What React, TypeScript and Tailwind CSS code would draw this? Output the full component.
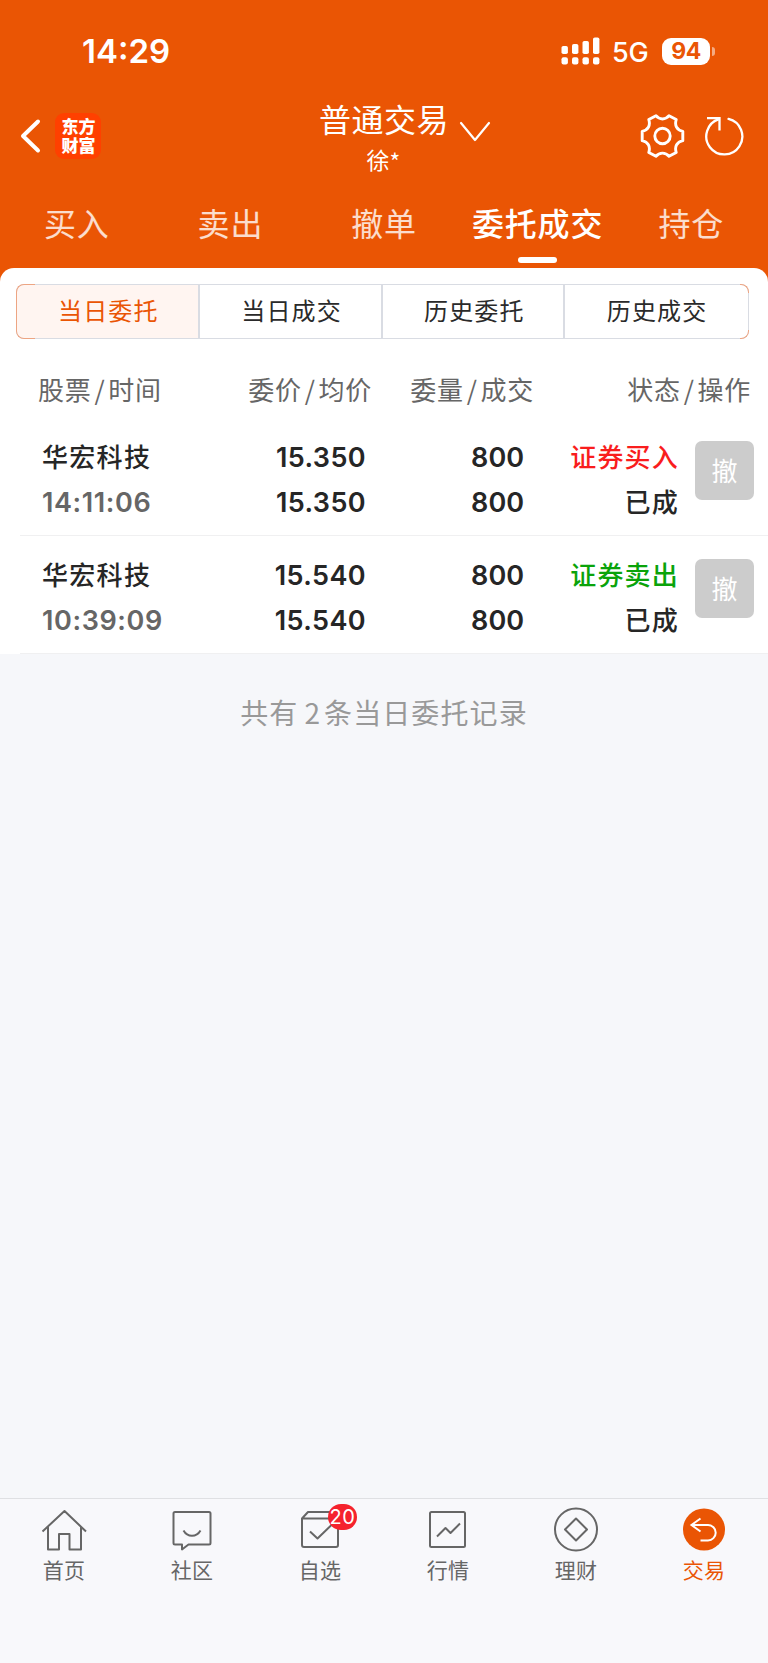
import type { ReactNode } from "react";

const cjk = "font-['Noto_Sans_CJK_SC',sans-serif]";
const latin = "font-['Inter','Noto_Sans_CJK_SC',sans-serif]";

const tabs = ["买入", "卖出", "撤单", "委托成交", "持仓"];
const segments = ["当日委托", "当日成交", "历史委托", "历史成交"];
const columns = [
  ["股票", "时间"],
  ["委价", "均价"],
  ["委量", "成交"],
  ["状态", "操作"],
];

type Order = { name: string; time: string; price: string; avg: string; qty: string; done: string; side: string; buy: boolean };

const orders: Order[] = [
  { name: "华宏科技", time: "14:11:06", price: "15.350", avg: "15.350", qty: "800", done: "800", side: "证券买入", buy: true },
  { name: "华宏科技", time: "10:39:09", price: "15.540", avg: "15.540", qty: "800", done: "800", side: "证券卖出", buy: false },
];

function StatusBar() {
  return (
    <div className={`flex h-[103px] items-center text-white ${latin}`}>
      <span className="mb-[2px] ml-[82px] w-[478px] text-[33px] font-semibold leading-[40px]">14:29</span>
      <svg className="mb-[1px] h-[28px] w-[40px]" viewBox="0 0 40 28" fill="#fff">
        <rect x="1.500" y="9" width="6.400" height="8" rx="1.800" />
        <rect x="12" y="7" width="6.400" height="10" rx="1.800" />
        <rect x="22.500" y="4" width="6.400" height="13" rx="1.800" />
        <rect x="33" y="0.500" width="6.400" height="16.500" rx="1.800" />
        <rect x="1.500" y="20.300" width="6.400" height="7.200" rx="2" />
        <rect x="12" y="20.300" width="6.400" height="7.200" rx="2" />
        <rect x="22.500" y="20.300" width="6.400" height="7.200" rx="2" />
        <rect x="33" y="20.300" width="6.400" height="7.200" rx="2" />
      </svg>
      <span className="ml-[12px] mt-[2px] w-[50px] text-[27px] font-medium leading-[40px] tracking-[-0.200px]">5G</span>
      <span className="mb-[1px] flex h-[27px] w-[48px] items-center justify-center rounded-[9px] bg-white text-[23px] font-bold leading-none tracking-[-0.5px] text-[#ea5504]">
        94
      </span>
      <span className="ml-[2px] h-[9px] w-[3px] rounded-r-full bg-white/50" />
    </div>
  );
}

function TitleBar() {
  return (
    <div className="flex h-[82px] text-white">
      <svg className="ml-[20px] mt-[15px] h-[36px] w-[22px]" viewBox="0 0 22 36" fill="none" stroke="#fff" strokeWidth="4" strokeLinecap="round" strokeLinejoin="round">
        <path d="M18 3.500 3 18l15 14.500" />
      </svg>
      <div className={`ml-[13px] mt-[10px] h-[46px] w-[46px] rounded-[9px] bg-[#ff4000] pl-px pt-[2.500px] text-center text-[17px] font-black leading-[19px] ${cjk}`}>
        东方
        <br />
        财富
      </div>
      <div className={`ml-[218px] w-[130px] ${cjk}`}>
        <div className="-mt-[3px] whitespace-nowrap text-[32px] leading-[36px] tracking-[0.500px]">普通交易</div>
        <div className="mt-[10px] pl-[47.500px] text-[23px] leading-[26px]">
          徐<span className="inline-block translate-y-[2px]">*</span>
        </div>
      </div>
      <svg className="ml-[10px] mt-[17px] h-[24px] w-[32px]" viewBox="0 0 32 24" fill="none" stroke="#fff" strokeWidth="2.200" strokeLinecap="round" strokeLinejoin="round">
        <path d="M2 3l14 17L30 3" />
      </svg>
      <svg className="ml-[148px] mt-[11px] h-[44px] w-[46px]" viewBox="-0.500 0 46 44" fill="none" stroke="#fff" strokeWidth="2.900" strokeLinejoin="round">
        <path d="M16.500 1.700C20 6 26 6 29.500 1.700L36.700 5.600C34.800 11.500 37.500 16 43.300 17.300V26.700C37.500 28 34.800 32.500 36.700 38.400L29.500 42.300C26 38 20 38 16.500 42.300L9.300 38.400C11.200 32.500 8.500 28 2.700 26.700V17.300C8.500 16 11.200 11.500 9.300 5.600Z" />
        <circle cx="23" cy="22" r="7.700" />
      </svg>
      <svg className="ml-[19px] mt-[13px] h-[40px] w-[42px]" viewBox="0 0.500 42 40" fill="none" stroke="#fff" strokeWidth="2.300">
        <path d="M24.500 3.400A18 18 0 1 1 15 3.700" strokeLinecap="round" />
        <path d="M3 2.600H15.500V15" />
      </svg>
    </div>
  );
}

function Tabs() {
  return (
    <div className={`grid h-[83px] grid-cols-5 text-center text-[32px] leading-[36px] tracking-[0.800px] ${cjk}`}>
      {tabs.map((t) => (
        <div key={t} className="flex flex-col items-center pt-[19px]">
          <span className={t === "委托成交" ? "whitespace-nowrap font-medium text-white" : "text-white/80"}>{t}</span>
          {t === "委托成交" && <span className="mt-[17px] h-[6px] w-[39px] rounded-full bg-white" />}
        </div>
      ))}
    </div>
  );
}

function Segments() {
  return (
    <div className={`relative ml-[16px] mt-[15px] grid h-[55px] w-[733px] grid-cols-4 rounded-[8px] border border-[#d9dce3] text-[24px] tracking-[1.200px] ${cjk}`}>
      {segments.map((s, i) => (
        <div
          key={s}
          className={
            i === 0
              ? "flex items-center justify-center rounded-l-[7px] border-r-2 border-[#d9dce3] bg-[#fff5f1] pb-[3px] pl-[2px] text-[#ea5504]"
              : i === 3
                ? "flex items-center justify-center rounded-r-[7px] bg-white pb-[3px] pl-px text-[#2a2a2a]"
                : "flex items-center justify-center border-r-2 border-[#d9dce3] bg-white pb-[3px] pl-[3px] text-[#2a2a2a]"
          }
        >
          {s}
        </div>
      ))}
      <span className="absolute -inset-y-px -left-px w-[19px] rounded-l-[8px] border-y border-l border-[#eda583]" />
      <span className="absolute -right-px -top-px h-[9px] w-[9px] rounded-tr-[8px] border-r border-t border-[#eda583]" />
      <span className="absolute -bottom-px -right-px h-[9px] w-[9px] rounded-br-[8px] border-b border-r border-[#eda583]" />
    </div>
  );
}

function OrderRow({ o }: { o: Order }) {
  return (
    <div>
      <div className={`grid h-[117px] grid-cols-[203px_163px_158px_155px_75px] pt-[17px] text-[27px] font-semibold leading-[45px] text-[#262626] ${latin}`}>
        <div className="pl-[42px]">
          <div className={`-mt-[2px] mb-[2px] text-[26px] font-medium tracking-[1.300px] ${cjk}`}>{o.name}</div>
          <div className="tracking-[0.600px] text-[#666] [font-kerning:none]">{o.time}</div>
        </div>
        <div className="text-right tracking-[0.400px]">
          <div>{o.price}</div>
          <div>{o.avg}</div>
        </div>
        <div className="text-right">
          <div>{o.qty}</div>
          <div>{o.done}</div>
        </div>
        <div className={`-mt-[2px] text-right text-[26px] font-medium tracking-[1.200px] ${cjk}`}>
          <div className={o.buy ? "text-[#f91d1d]" : "text-[#0aa30a]"}>{o.side}</div>
          <div>已成</div>
        </div>
        <div className={`ml-[16px] mt-[6px] flex h-[59px] w-[59px] items-center justify-center rounded-[7px] bg-[#ccc] pb-[3px] text-[26px] font-normal text-white ${cjk}`}>
          撤
        </div>
      </div>
      <div className="ml-[20px] h-px bg-[#f0f0f1]" />
    </div>
  );
}

function NavItem({ label, active, children }: { label: string; active?: boolean; children: ReactNode }) {
  return (
    <div className={`flex flex-col items-center pt-[8px] ${active ? "text-[#ea5504]" : "text-[#666]"}`}>
      <div className="relative h-[46px] w-[46px]">
        <svg className="h-[46px] w-[46px]" viewBox="0.500 0 46 46" fill="none" stroke="currentColor" strokeWidth="2" strokeLinejoin="round">
          {children}
        </svg>
        {label === "自选" && (
          <span className={`absolute left-[31px] top-[-3px] flex h-[26px] w-[29px] items-center justify-center rounded-full bg-[#f5222d] text-[20px] leading-none tracking-[0.500px] text-white ${latin}`}>20</span>
        )}
      </div>
      <span className={`mt-[3px] text-[21px] leading-[26px] tracking-[0.300px] ${cjk}`}>{label}</span>
    </div>
  );
}

export default function App() {
  return (
    <div className="flex h-[1663px] w-[768px] flex-col overflow-hidden bg-[#f6f7fa]">
      <header className="bg-[#ea5504]">
        <StatusBar />
        <TitleBar />
        <Tabs />
      </header>
      <div className="bg-[#ea5504]">
        <main className="h-[386px] rounded-t-[14px] bg-white pt-px">
          <Segments />
          <div className={`mt-[32px] grid h-[36px] grid-cols-[208px_164px_162px_217px] text-[26px] leading-[36px] tracking-[0.700px] text-[#666] ${cjk}`}>
            {columns.map(([a, b], i) => (
              <div key={a} className={i === 0 ? "pl-[38px]" : "text-right"}>
                {a}
                <span className="mx-[3px]">/</span>
                {b}
              </div>
            ))}
          </div>
          <div className="mt-[11px]">
            {orders.map((o) => (
              <OrderRow key={o.time} o={o} />
            ))}
          </div>
        </main>
      </div>
      <p className={`mt-[38px] text-center text-[28px] leading-[40px] tracking-[1.100px] text-[#999] ${cjk}`}>
        共有<span className="ml-[6px] mr-[3px]">2</span>条当日委托记录
      </p>
      <nav className="mt-auto grid h-[165px] grid-cols-6 border-t border-[#dfe0e3] bg-[#f8f8fb]">
        <NavItem label="首页">
          <path d="M2 24.500 24 4l21.500 20.500M7.500 20v22.500h11V27H29v15.500H40.500V20" />
        </NavItem>
        <NavItem label="社区">
          <path d="M6.500 5h34a1.500 1.500 0 0 1 1.500 1.500V36a1.500 1.500 0 0 1-1.500 1.500H20L13.500 42.500V37.500H6.500A1.500 1.500 0 0 1 5 36V6.500A1.500 1.500 0 0 1 6.500 5Z" />
          <path d="M15 23.500c4 7 13 7 17 0" />
        </NavItem>
        <NavItem label="自选">
          <path d="M5.500 11.500V38a2 2 0 0 0 2 2h32a2 2 0 0 0 2-2V11.500h-36L11.500 5h27M13.500 24.500l7.500 7L35.500 17.500" />
        </NavItem>
        <NavItem label="行情">
          <rect x="5.500" y="5" width="35" height="35" rx="1.500" />
          <path d="M12.500 29.500 21 21l5 5 9.500-9.500" />
        </NavItem>
        <NavItem label="理财">
          <circle cx="23.500" cy="22.500" r="21" />
          <path d="M23.500 11.500 34.500 22.500 23.500 33.500 12.500 22.500Z" />
        </NavItem>
        <NavItem label="交易" active>
          <circle cx="23.500" cy="22.500" r="21" fill="currentColor" stroke="none" />
          <path d="M20 11.500 11 18l9 6.500M11 18h16.500a7.700 7.700 0 0 1 0 15.400H20" stroke="#fff" strokeLinejoin="miter" />
        </NavItem>
      </nav>
    </div>
  );
}
